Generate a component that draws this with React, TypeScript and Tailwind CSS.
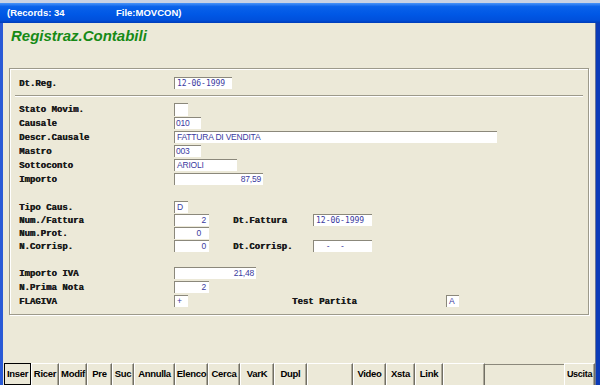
import React from "react";

const LBL =
  "font-['Liberation_Mono',monospace] font-bold text-[9px] leading-[12px] text-[#1a1a1a] whitespace-pre [text-shadow:0.4px_0_0_#1a1a1a]";
const MONO = "font-['DejaVu_Sans_Mono',monospace] text-[8px] text-[#3a3aa0]";
const SANS =
  "font-['Liberation_Sans',sans-serif] text-[8.5px] tracking-[-0.2px] text-[#3a3aa0]";

function Box({
  cls,
  children,
  mono,
}: {
  cls: string;
  children?: React.ReactNode;
  mono?: boolean;
}) {
  return (
    <div
      className={`h-[12px] shrink-0 bg-white border-t border-l border-t-[#8b887b] border-l-[#8b887b] flex items-center overflow-hidden whitespace-pre leading-[11px] ${
        mono ? MONO : SANS
      } ${cls}`}
    >
      {children}
    </div>
  );
}

function Label({ children, cls = "w-[155px]" }: { children: React.ReactNode; cls?: string }) {
  return <div className={`${LBL} ${cls} shrink-0 mt-[1px]`}>{children}</div>;
}

const BTN =
  "h-full shrink-0 flex items-center justify-center bg-[#ECE9D8] border-t border-l border-r border-t-white border-l-white border-r-[#716f64] shadow-[inset_-1px_0_0_#aca899] font-['Liberation_Sans',sans-serif] font-bold text-[9.5px] tracking-[-0.3px] text-black";

export default function App() {
  return (
    <div className="w-[600px] h-[385px] overflow-hidden flex flex-col bg-[#0a3fd0]">
      <div className="h-[3px] shrink-0 bg-[#c9d2e4]" />
      <div className="h-[20px] shrink-0 flex items-center text-white font-['Liberation_Sans',sans-serif] font-bold text-[9.5px] bg-[linear-gradient(180deg,#4a94f8_0%,#0a62ea_18%,#0058e6_55%,#0050dc_85%,#003cb8_100%)]">
        <span className="ml-[7px] w-[109px] whitespace-pre">(Records: 34</span>
        <span>File:MOVCON)</span>
      </div>
      <div className="flex-1 flex min-h-0">
        <div className="w-[3px] shrink-0 bg-[#2a5ad6]" />
        <div className="flex-1 bg-[#ECE9D8] flex flex-col border-r border-r-[#6a7696]">
          {/* title */}
          <div className="h-[45px] shrink-0 pl-[8px]">
            <span className="font-['Liberation_Sans',sans-serif] font-bold italic text-[15px] leading-[17px] text-[#168a16]">
              Registraz.Contabili
            </span>
          </div>

          {/* group box */}
          <div className="h-[247px] shrink-0 mx-[6px] border border-[#9d9a8b] shadow-[1px_1px_0_#fff,inset_1px_1px_0_#fff] pl-[9px] pt-[8px] flex flex-col">
            <div className="flex items-start h-[13px]">
              <Label>Dt.Reg.</Label>
              <Box cls="w-[58px] pl-[2px]" mono>
                12-06-1999
              </Box>
            </div>
            <div className="mt-[5px] -ml-[4px] mr-[5px] border-t border-b border-t-[#9d9a8b] border-b-white" />
            <div className="mt-[6px] flex flex-col">
              <div className="flex items-start h-[14px]">
                <Label>Stato Movim.</Label>
                <Box cls="w-[14px] h-[13px]" />
              </div>
              <div className="flex items-start h-[14px]">
                <Label>Causale</Label>
                <Box cls="w-[27px] pl-[1px]">010</Box>
              </div>
              <div className="flex items-start h-[14px]">
                <Label>Descr.Causale</Label>
                <Box cls="w-[323px] pl-[2px]">FATTURA DI VENDITA</Box>
              </div>
              <div className="flex items-start h-[14px]">
                <Label>Mastro</Label>
                <Box cls="w-[27px] pl-[1px]">003</Box>
              </div>
              <div className="flex items-start h-[14px]">
                <Label>Sottoconto</Label>
                <Box cls="w-[63px] pl-[2px]">ARIOLI</Box>
              </div>
              <div className="flex items-start h-[14px]">
                <Label>Importo</Label>
                <Box cls="w-[89px] justify-end pr-[2px]">87,59</Box>
              </div>
              <div className="h-[14px]" />
              <div className="flex items-start h-[13px]">
                <Label>Tipo Caus.</Label>
                <Box cls="w-[14px] pl-[2px]">D</Box>
              </div>
              <div className="flex items-start h-[13px]">
                <Label>Num./Fattura</Label>
                <Box cls="w-[35px] justify-end pr-[3px]">2</Box>
                <Label cls="w-[80px] ml-[24px]">Dt.Fattura</Label>
                <Box cls="w-[59px] pl-[2px]" mono>
                  12-06-1999
                </Box>
              </div>
              <div className="flex items-start h-[13px]">
                <Label>Num.Prot.</Label>
                <Box cls="w-[35px] justify-end pr-[8px]">0</Box>
              </div>
              <div className="flex items-start h-[13px]">
                <Label>N.Corrisp.</Label>
                <Box cls="w-[35px] justify-end pr-[3px]">0</Box>
                <Label cls="w-[80px] ml-[24px]">Dt.Corrisp.</Label>
                <Box cls="w-[59px] pl-[2px]" mono>
                  {"  -  -    "}
                </Box>
              </div>
              <div className="h-[14px]" />
              <div className="flex items-start h-[14px]">
                <Label>Importo IVA</Label>
                <Box cls="w-[82px] justify-end pr-[2px]">21,48</Box>
              </div>
              <div className="flex items-start h-[14px]">
                <Label>N.Prima Nota</Label>
                <Box cls="w-[35px] justify-end pr-[3px]">2</Box>
              </div>
              <div className="flex items-start h-[14px]">
                <Label>FLAGIVA</Label>
                <Box cls="w-[14px] pl-[2px]">+</Box>
                <Label cls="w-[154px] ml-[104px]">Test Partita</Label>
                <Box cls="w-[13px] pl-[2px]">A</Box>
              </div>
            </div>
          </div>

          <div className="flex-1" />

          {/* toolbar */}
          <div className="h-[22px] shrink-0 flex pl-[1px]">
            <div className="h-full shrink-0 w-[27px] flex items-center justify-center bg-[#ECE9D8] border border-black font-['Liberation_Sans',sans-serif] font-bold text-[9.5px] tracking-[-0.3px] text-black">
              Inser
            </div>
            <div className={`${BTN} w-[28px]`}>Ricer</div>
            <div className={`${BTN} w-[28px]`}>Modif</div>
            <div className={`${BTN} w-[25px]`}>Pre</div>
            <div className={`${BTN} w-[22px]`}>Suc</div>
            <div className={`${BTN} w-[41px]`}>Annulla</div>
            <div className={`${BTN} w-[33px]`}>Elenco</div>
            <div className={`${BTN} w-[32px]`}>Cerca</div>
            <div className={`${BTN} w-[34px]`}>VarK</div>
            <div className={`${BTN} w-[33px]`}>Dupl</div>
            <div className={`${BTN} w-[46px]`} />
            <div className={`${BTN} w-[33px]`}>Video</div>
            <div className={`${BTN} w-[29px]`}>Xsta</div>
            <div className={`${BTN} w-[28px]`}>Link</div>
            <div className={`${BTN} w-[42px]`} />
            <div className="w-[79px] shrink-0 h-full mt-[1px] border-t border-t-[#8b887b]" />
            <div className={`${BTN} w-[31px] text-[9px]`}>Uscita</div>
          </div>
        </div>
        <div className="w-[4px] shrink-0 bg-[#0b3bb8]" />
      </div>
    </div>
  );
}
